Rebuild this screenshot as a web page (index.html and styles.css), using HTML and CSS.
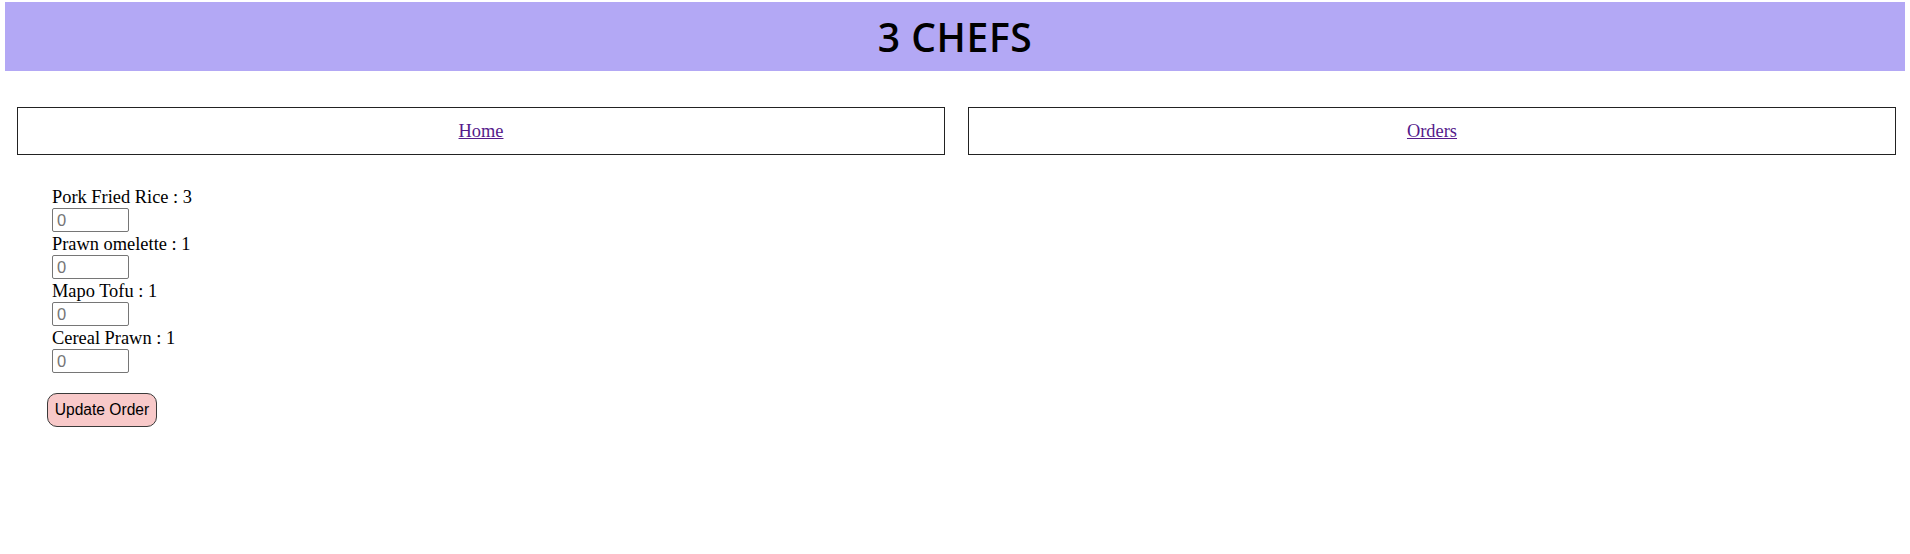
FILE: index.html
```html
<!DOCTYPE html>
<html lang="en">
<head>
<meta charset="utf-8">
<title>3 CHEFS</title>
<link rel="stylesheet" href="styles.css">
</head>
<body>
<header class="banner"><h1 class="title">3 CHEFS</h1></header>
<nav class="nav">
  <div class="nav-box"><a class="nav-link" href="#">Home</a></div>
  <div class="nav-box"><a class="nav-link" href="#">Orders</a></div>
</nav>
<form class="order-form">
  <div class="items">
    <div class="item"><label class="item-label">Pork Fried Rice : 3</label><input class="qty" type="text" placeholder="0"></div>
    <div class="item"><label class="item-label">Prawn omelette : 1</label><input class="qty" type="text" placeholder="0"></div>
    <div class="item"><label class="item-label">Mapo Tofu : 1</label><input class="qty" type="text" placeholder="0"></div>
    <div class="item"><label class="item-label">Cereal Prawn : 1</label><input class="qty" type="text" placeholder="0"></div>
  </div>
  <button class="update-btn" type="button">Update Order</button>
</form>
</body>
</html>
```
FILE: styles.css
```css
html, body {
  margin: 0;
  padding: 0;
  background: #ffffff;
}
body {
  font-family: "Liberation Serif", "Times New Roman", serif;
  font-size: 18.4px;
  color: #000;
}
.banner {
  margin: 2px 5px 0;
  height: 69px;
  background: #b3a8f5;
  display: flex;
  align-items: center;
  justify-content: center;
}
.title {
  margin: 0;
  font-family: "Open Sans", "Noto Sans", sans-serif;
  font-weight: 600;
  font-size: 39px;
  letter-spacing: 0.6px;
  line-height: 1;
  color: #000;
}
.nav {
  margin-top: 36px;
  padding: 0 14px 0 17px;
  display: grid;
  grid-template-columns: 1fr 1fr;
  gap: 23px;
}
.nav-box {
  border: 1px solid #222;
  height: 46px;
  display: flex;
  align-items: center;
  justify-content: center;
}
.nav-link {
  color: #551a8b;
  text-decoration: underline;
  line-height: 21px;
}
.order-form {
  padding: 30px 0 0 47px;
}
.items {
  padding-left: 5px;
}
.item {
  display: flex;
  flex-direction: column;
  align-items: flex-start;
}
.item-label {
  box-sizing: border-box;
  padding-top: 2px;
  line-height: 21px;
  height: 23px;
}
.qty {
  box-sizing: border-box;
  width: 77px;
  height: 24px;
  border: 1px solid #767676;
  border-radius: 2px;
  padding: 0 4px;
  font-family: "Liberation Sans", Arial, sans-serif;
  font-size: 16.5px;
  margin: 0;
}
.qty::placeholder {
  color: #757575;
}
.update-btn {
  margin-top: 20px;
  box-sizing: border-box;
  width: 110px;
  height: 34px;
  padding: 0;
  background: #f8c9c9;
  border: 1px solid #3a3a3a;
  border-radius: 10px;
  font-family: "Liberation Sans", Arial, sans-serif;
  font-size: 15.6px;
  color: #000;
}
```
